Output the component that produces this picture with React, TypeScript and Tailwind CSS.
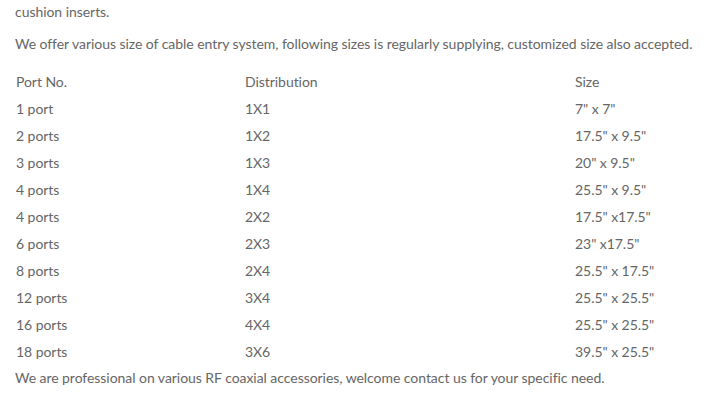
const rows = [
  ["1 port", "1X1", '7" x 7"'],
  ["2 ports", "1X2", '17.5" x 9.5"'],
  ["3 ports", "1X3", '20" x 9.5"'],
  ["4 ports", "1X4", '25.5" x 9.5"'],
  ["4 ports", "2X2", '17.5" x17.5"'],
  ["6 ports", "2X3", '23" x17.5"'],
  ["8 ports", "2X4", '25.5" x 17.5"'],
  ["12 ports", "3X4", '25.5" x 25.5"'],
  ["16 ports", "4X4", '25.5" x 25.5"'],
  ["18 ports", "3X6", '39.5" x 25.5"'],
]

export default function App() {
  return (
    <div className="w-[706px] h-[403px] overflow-hidden bg-white px-[15px] text-[14px] tracking-[-0.05px] text-[#666] font-['Lato',sans-serif]">
      <p className="leading-[24px]">cushion inserts.</p>
      <p className="mt-[8px] leading-[24px] whitespace-nowrap">
        We offer various size of cable entry system, following sizes is regularly supplying, customized size also accepted.
      </p>
      <table className="mt-[12px] w-full border-collapse">
        <tbody>
          <tr className="h-[27px]">
            <td className="w-[230px] pl-px">Port No.</td>
            <td className="w-[330px]">Distribution</td>
            <td>Size</td>
          </tr>
          {rows.map(([port, dist, size], i) => (
            <tr key={i} className="h-[27px]">
              <td className="pl-px">{port}</td>
              <td>{dist}</td>
              <td>{size}</td>
            </tr>
          ))}
        </tbody>
      </table>
      <p className="mt-[1px] leading-[24px]">
        We are professional on various RF coaxial accessories, welcome contact us for your specific need.
      </p>
    </div>
  )
}
